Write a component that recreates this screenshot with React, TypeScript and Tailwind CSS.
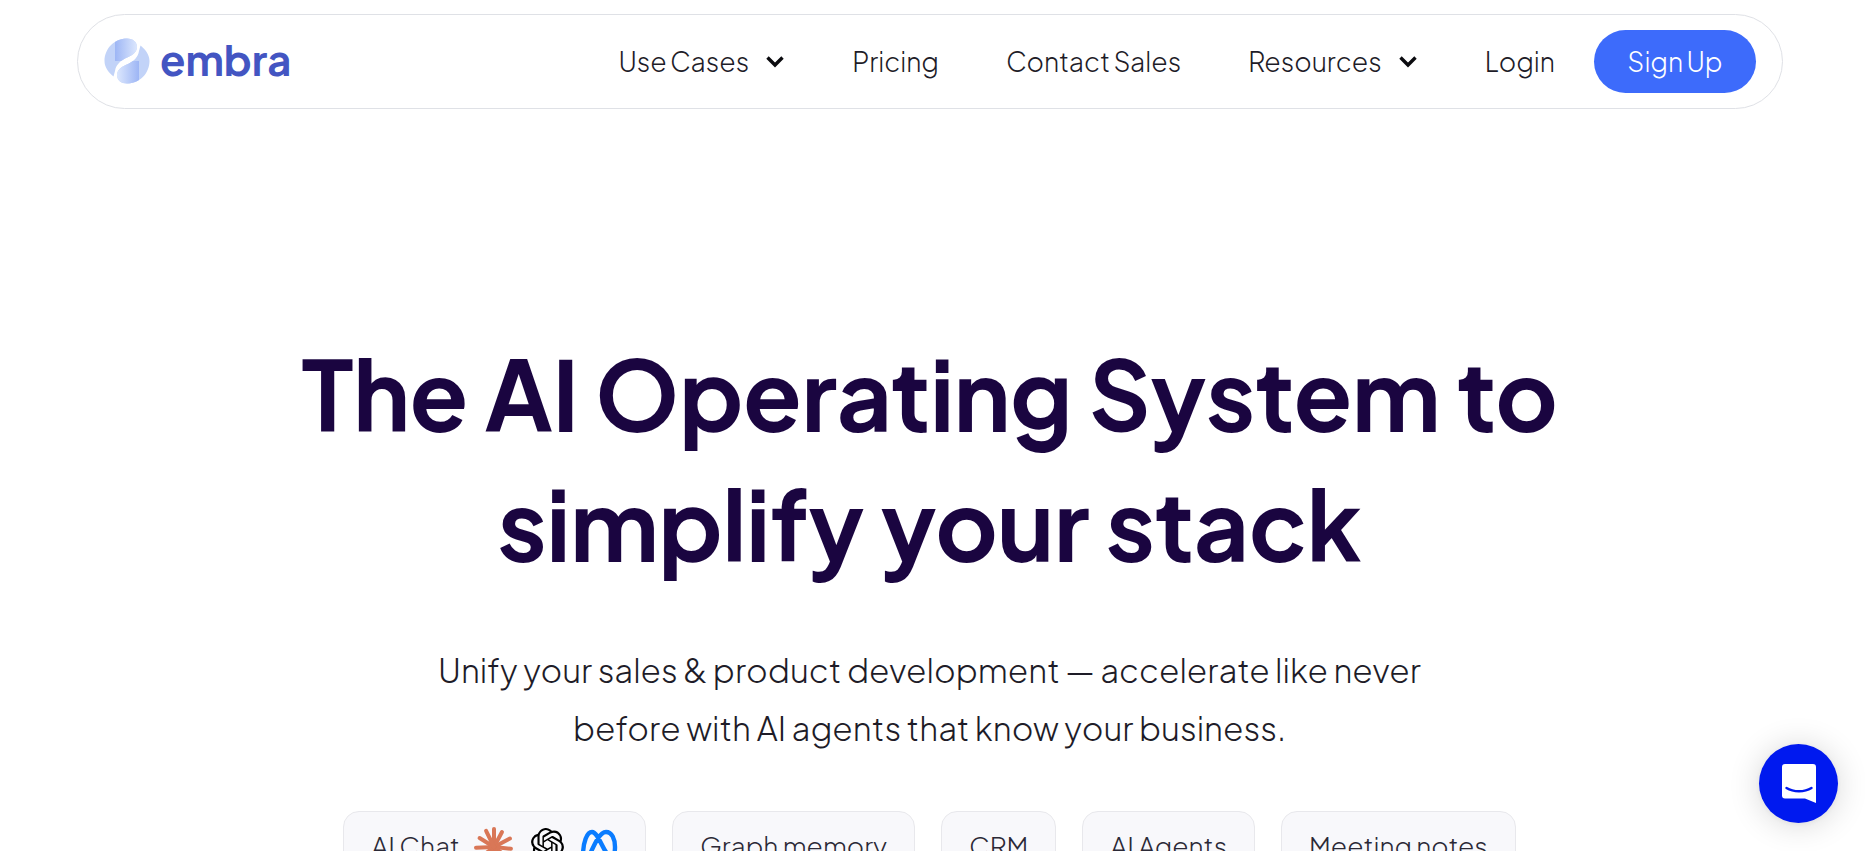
import type { ReactNode } from "react";
import { SiOpenai } from "react-icons/si";

const font = "font-['Plus_Jakarta_Sans','Inter','Noto_Sans',sans-serif]";

function Logo() {
  const piece =
    "M23 .5C29 .5 33 4 33 9C33 15 27 18 22 20C16 23 12 27 11 33L9.500 38.500C4 34 .5 29 .5 23C.5 11 10 .5 23 .5Z";
  return (
    <svg width="46" height="46" viewBox="0 0 46 46">
      <defs>
        <linearGradient id="strip" x1="0" y1="0" x2="1" y2="0">
          <stop offset="0" stopColor="#7f9ef1" />
          <stop offset="1" stopColor="#dce7fd" />
        </linearGradient>
        <clipPath id="stripClip">
          <rect x="11" y="0" width="24" height="23" />
        </clipPath>
      </defs>
      {[0, 180].map((angle) => (
        <g key={angle} transform={`rotate(${angle} 23 23)`}>
          <path d={piece} fill="#c2d3f8" />
          <path d={piece} fill="url(#strip)" clipPath="url(#stripClip)" />
        </g>
      ))}
    </svg>
  );
}

function Chevron() {
  return (
    <svg width="20" height="14" viewBox="0 0 20 14" fill="none">
      <path d="M2.5 2.5 10 10l7.5-7.5" stroke="#0b0b0f" strokeWidth="3.4" />
    </svg>
  );
}

function NavItem({ label, chevron }: { label: string; chevron?: boolean }) {
  return (
    <a className="flex items-center gap-[16px] text-[26.5px] font-light [word-spacing:-1px] text-[#1e1c28]">
      {label}
      {chevron && <Chevron />}
    </a>
  );
}

function Tag({ label, children }: { label: string; children?: ReactNode }) {
  return (
    <div className="flex h-[70px] items-start gap-3 rounded-2xl border border-[#e8e8ec] bg-[#f8f8fb] px-[27px] pt-[14px] text-[26.3px] font-light text-[#2b2936]">
      {label}
      {children}
    </div>
  );
}

function ClaudeStar() {
  const rays = [0, 28, 62, 96, 128, 158, 196, 232, 268, 302, 334];
  return (
    <svg width="40" height="40" viewBox="0 0 40 40" className="mt-[1px] ml-[2px]">
      {rays.map((r, i) => (
        <line
          key={r}
          x1="20"
          y1="20"
          x2="20"
          y2={i % 2 ? 3 : 2}
          stroke="#d97757"
          strokeWidth="4"
          strokeLinecap="round"
          transform={`rotate(${r} 20 20)`}
        />
      ))}
    </svg>
  );
}

function MetaMark() {
  return (
    <svg width="38" height="32" viewBox="0 0 38 32" fill="none" className="mt-[3px] ml-[4px]">
      <path
        d="M3 27C3 13 7 3 12 3C19 3 24 27 31 27C34 27 35 23 35 18C35 10 32 3 26 3C20 3 15 14 10 25"
        stroke="#0a7cff"
        strokeWidth="4.4"
        strokeLinecap="round"
      />
    </svg>
  );
}

export default function App() {
  return (
    <div className={`h-[851px] overflow-hidden bg-white ${font}`}>
      <div className="pt-[14px] pr-[82px] pl-[77px]">
        <nav className="flex h-[95px] items-center justify-between rounded-full border border-[#dfe1e6] pr-[26px] pl-[26px]">
          <div className="-mt-[2px] flex items-center gap-[10px] text-[41.5px] font-bold text-[#4355c2]">
            <Logo />
            <span className="-mt-[2px]">embra</span>
          </div>
          <div className="flex items-center gap-[67px]">
            <NavItem label="Use Cases" chevron />
            <NavItem label="Pricing" />
            <NavItem label="Contact Sales" />
            <NavItem label="Resources" chevron />
            <div className="flex items-center gap-[39px]">
              <NavItem label="Login" />
              <button className="h-[63px] w-[162px] rounded-full bg-[#3d6bfb] text-[26.5px] font-light [word-spacing:-1px] text-white">
                Sign Up
              </button>
            </div>
          </div>
        </nav>
      </div>
      <main className="flex flex-col items-center pt-[219px] pr-[6px]">
        <h1 className="text-center text-[96px] leading-[130px] font-bold tracking-[-0.5px] text-[#1a0540]">
          The AI Operating System to
          <br />
          simplify your stack
        </h1>
        <p className="mt-[53px] text-center text-[33px] leading-[58px] font-light text-[#1e1c28]">
          Unify your sales &amp; product development — accelerate like never
          <br />
          before with AI agents that know your business.
        </p>
        <div className="mt-[54px] flex gap-[26px]">
          <Tag label="AI Chat">
            <ClaudeStar />
            <SiOpenai size={33} className="mt-[2px] ml-[5px] text-black" />
            <MetaMark />
          </Tag>
          <Tag label="Graph memory" />
          <Tag label="CRM" />
          <Tag label="AI Agents" />
          <Tag label="Meeting notes" />
        </div>
      </main>
      <button className="fixed right-[27px] bottom-[28px] flex h-[79px] w-[79px] items-center justify-center rounded-full bg-[#0019ef] shadow-[0_1px_6px_rgba(0,0,0,0.06),0_2px_32px_rgba(0,0,0,0.16)]">
        <svg width="34" height="40" viewBox="0 0 34 40" fill="none">
          <path d="M3 0h28a3 3 0 0 1 3 3v36l-11-4.500H3a3 3 0 0 1-3-3V3a3 3 0 0 1 3-3Z" fill="#fff" />
          <path d="M4.500 24c7 4.400 18 4.400 25 0" stroke="#0019ef" strokeWidth="2.4" strokeLinecap="round" />
        </svg>
      </button>
    </div>
  );
}
